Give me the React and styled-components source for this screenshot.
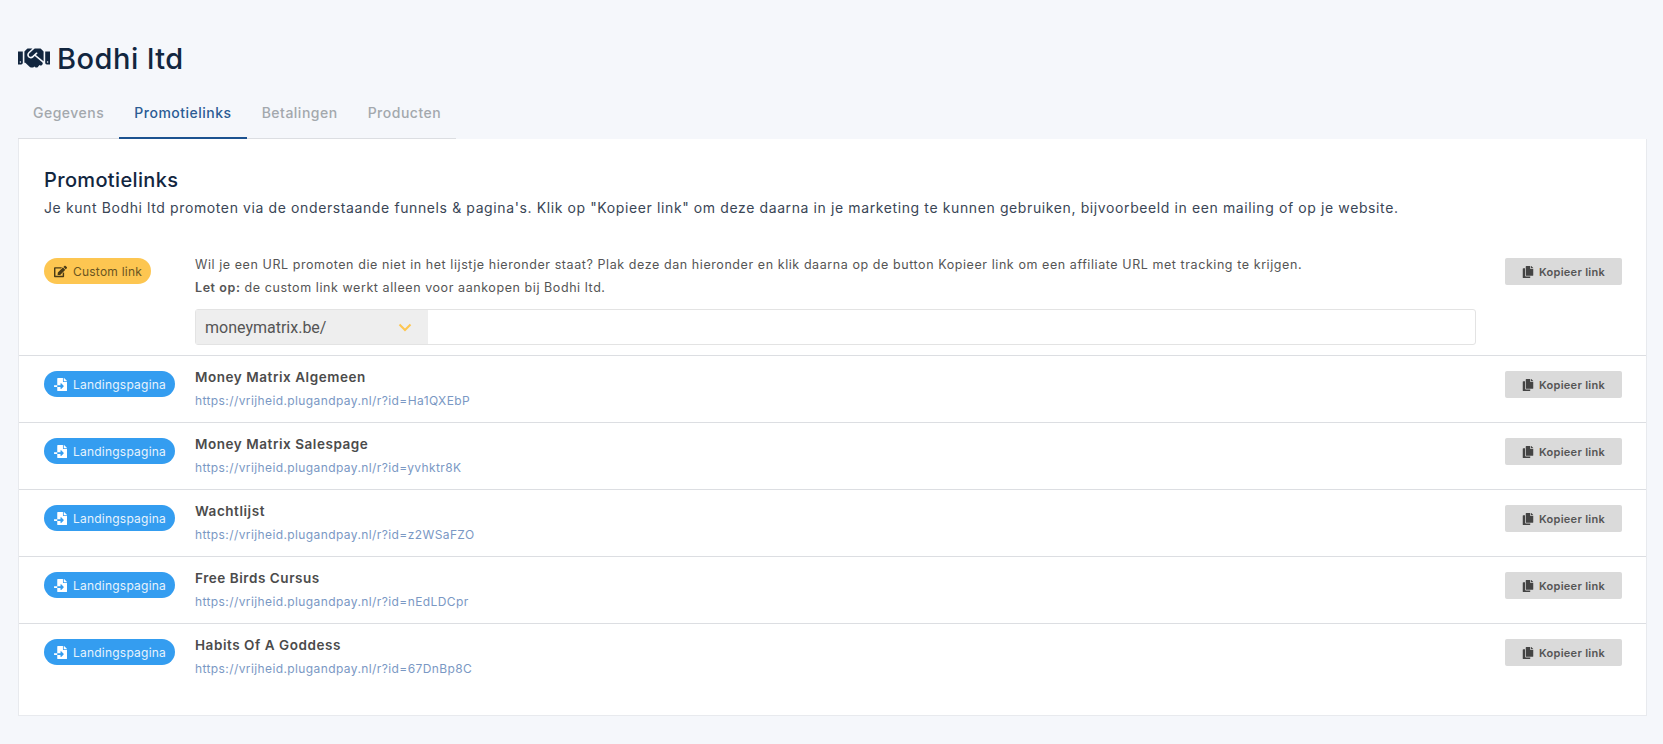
import styled, { createGlobalStyle } from "styled-components";
import { FaHandshake, FaEdit, FaFileImport, FaCopy } from "react-icons/fa";

const GlobalStyle = createGlobalStyle`
  html, body {
    margin: 0;
    padding: 0;
    background: #f5f7fb;
  }
  * {
    box-sizing: border-box;
  }
`;

const Page = styled.div`
  width: 1663px;
  height: 744px;
  overflow: hidden;
  padding: 38px 16px 0 18px;
  font-family: Inter, "Liberation Sans", sans-serif;
`;

const Title = styled.h1`
  display: flex;
  align-items: center;
  gap: 7px;
  height: 40px;
  margin: 0 0 16px;
  font-size: 29px;
  font-weight: 500;
  letter-spacing: 0.5px;
  color: #12263f;
`;

const TabBar = styled.nav`
  display: flex;
  width: 438px;
  height: 45px;
  border-bottom: 1px solid #dcdee2;
`;

const Tab = styled.a`
  display: flex;
  align-items: center;
  justify-content: center;
  height: 45px;
  padding: 0 15px 6px;
  font-size: 14px;
  font-weight: 500;
  letter-spacing: 0.5px;
  color: ${(p) => (p.$active ? "#2b5c94" : "#a3a8ad")};
  border-bottom: 2px solid ${(p) => (p.$active ? "#1c5290" : "transparent")};
`;

const Card = styled.section`
  height: 577px;
  padding: 28px 24px 0 25px;
  background: #fff;
  border: 1px solid #e8eaee;
  border-top: 0;
`;

const CardTitle = styled.h2`
  margin: 0;
  font-size: 20px;
  line-height: 26px;
  font-weight: 500;
  letter-spacing: 0.35px;
  color: #12263f;
`;

const Intro = styled.p`
  margin: 3px 0 33px;
  font-size: 14px;
  line-height: 24px;
  letter-spacing: 0.61px;
  color: #3a4656;
`;

const Row = styled.div`
  display: grid;
  grid-template-columns: 151px 1fr 117px;
  align-items: start;
  margin: 0 -24px 0 -25px;
  padding: ${(p) => (p.$custom ? "0 24px 10px 25px" : "15px 24px 0 25px")};
  height: ${(p) => (p.$custom ? "auto" : "67px")};
  border-bottom: ${(p) => (p.$last ? "0" : "1px solid #dcdee2")};
`;

const Badge = styled.span`
  display: inline-flex;
  align-items: center;
  justify-self: start;
  gap: 6px;
  height: 26px;
  margin-top: ${(p) => (p.$kind === "custom" ? "5px" : "0")};
  padding: 0 9px 0 10px;
  border-radius: 13px;
  font-size: 12px;
  letter-spacing: 0.22px;
  background: ${(p) => (p.$kind === "custom" ? "#fdc651" : "#349df0")};
  color: ${(p) => (p.$kind === "custom" ? "#6b5522" : "#e6f3fd")};
  svg {
    font-size: 13px;
    color: ${(p) => (p.$kind === "custom" ? "#4a3b16" : "#fff")};
  }
`;

const Body = styled.div`
  padding-right: 29px;
  min-width: 0;
`;

const Help = styled.p`
  margin: 0;
  font-size: 12.5px;
  line-height: 23px;
  letter-spacing: 0.575px;
  color: #555;
  b {
    font-weight: 600;
  }
`;

const LinkInput = styled.div`
  display: flex;
  height: 36px;
  margin-top: 10px;
  border: 1px solid #e3e3e3;
  border-radius: 3px;
`;

const Prefix = styled.div`
  display: flex;
  align-items: center;
  justify-content: space-between;
  width: 232px;
  padding: 0 16px 0 9px;
  background: #eeeeee;
  font-family: Roboto, "Liberation Sans", sans-serif;
  font-size: 16px;
  color: #555;
`;

const LinkText = styled.div`
  margin-top: -3px;
`;

const LinkName = styled.div`
  font-size: 13.5px;
  line-height: 18px;
  font-weight: 600;
  letter-spacing: 0.55px;
  color: #4b4b4b;
`;

const LinkUrl = styled.a`
  display: block;
  margin-top: 7px;
  font-size: 12px;
  line-height: 16px;
  letter-spacing: 0.4px;
  color: #7a98c4;
`;

const CopyButton = styled.button`
  display: flex;
  align-items: center;
  justify-content: center;
  gap: 5px;
  height: 27px;
  margin-top: ${(p) => (p.$custom ? "5px" : "0")};
  padding: 0;
  border: 0;
  border-radius: 2px;
  background: #dadada;
  font-family: inherit;
  font-size: 11px;
  font-weight: 600;
  letter-spacing: 0.3px;
  color: #555;
  svg {
    font-size: 12px;
    color: #444;
  }
`;

const links = [
  { name: "Money Matrix Algemeen", id: "Ha1QXEbP" },
  { name: "Money Matrix Salespage", id: "yvhktr8K" },
  { name: "Wachtlijst", id: "z2WSaFZO" },
  { name: "Free Birds Cursus", id: "nEdLDCpr" },
  { name: "Habits Of A Goddess", id: "67DnBp8C" },
];

const tabs = ["Gegevens", "Promotielinks", "Betalingen", "Producten"];

const Copy = ({ custom }) => (
  <CopyButton $custom={custom}>
    <FaCopy />
    Kopieer link
  </CopyButton>
);

export default function App() {
  return (
    <Page>
      <GlobalStyle />
      <Title>
        <FaHandshake size={32} />
        Bodhi ltd
      </Title>
      <TabBar>
        {tabs.map((t) => (
          <Tab key={t} $active={t === "Promotielinks"}>
            {t}
          </Tab>
        ))}
      </TabBar>
      <Card>
        <CardTitle>Promotielinks</CardTitle>
        <Intro>
          Je kunt Bodhi ltd promoten via de onderstaande funnels &amp; pagina's. Klik op "Kopieer link" om deze daarna in
          je marketing te kunnen gebruiken, bijvoorbeeld in een mailing of op je website.
        </Intro>
        <Row $custom>
          <Badge $kind="custom">
            <FaEdit />
            Custom link
          </Badge>
          <Body>
            <Help>
              Wil je een URL promoten die niet in het lijstje hieronder staat? Plak deze dan hieronder en klik daarna op
              de button Kopieer link om een affiliate URL met tracking te krijgen.
            </Help>
            <Help>
              <b>Let op:</b> de custom link werkt alleen voor aankopen bij Bodhi ltd.
            </Help>
            <LinkInput>
              <Prefix>
                moneymatrix.be/
                <svg width="14" height="9" viewBox="0 0 14 9" fill="none">
                  <path d="M1.5 1.5 7 7l5.5-5.5" stroke="#fdc651" strokeWidth="2" />
                </svg>
              </Prefix>
            </LinkInput>
          </Body>
          <Copy custom />
        </Row>
        {links.map((l, i) => (
          <Row key={l.id} $last={i === links.length - 1}>
            <Badge>
              <FaFileImport />
              Landingspagina
            </Badge>
            <LinkText>
              <LinkName>{l.name}</LinkName>
              <LinkUrl>https://vrijheid.plugandpay.nl/r?id={l.id}</LinkUrl>
            </LinkText>
            <Copy />
          </Row>
        ))}
      </Card>
    </Page>
  );
}
